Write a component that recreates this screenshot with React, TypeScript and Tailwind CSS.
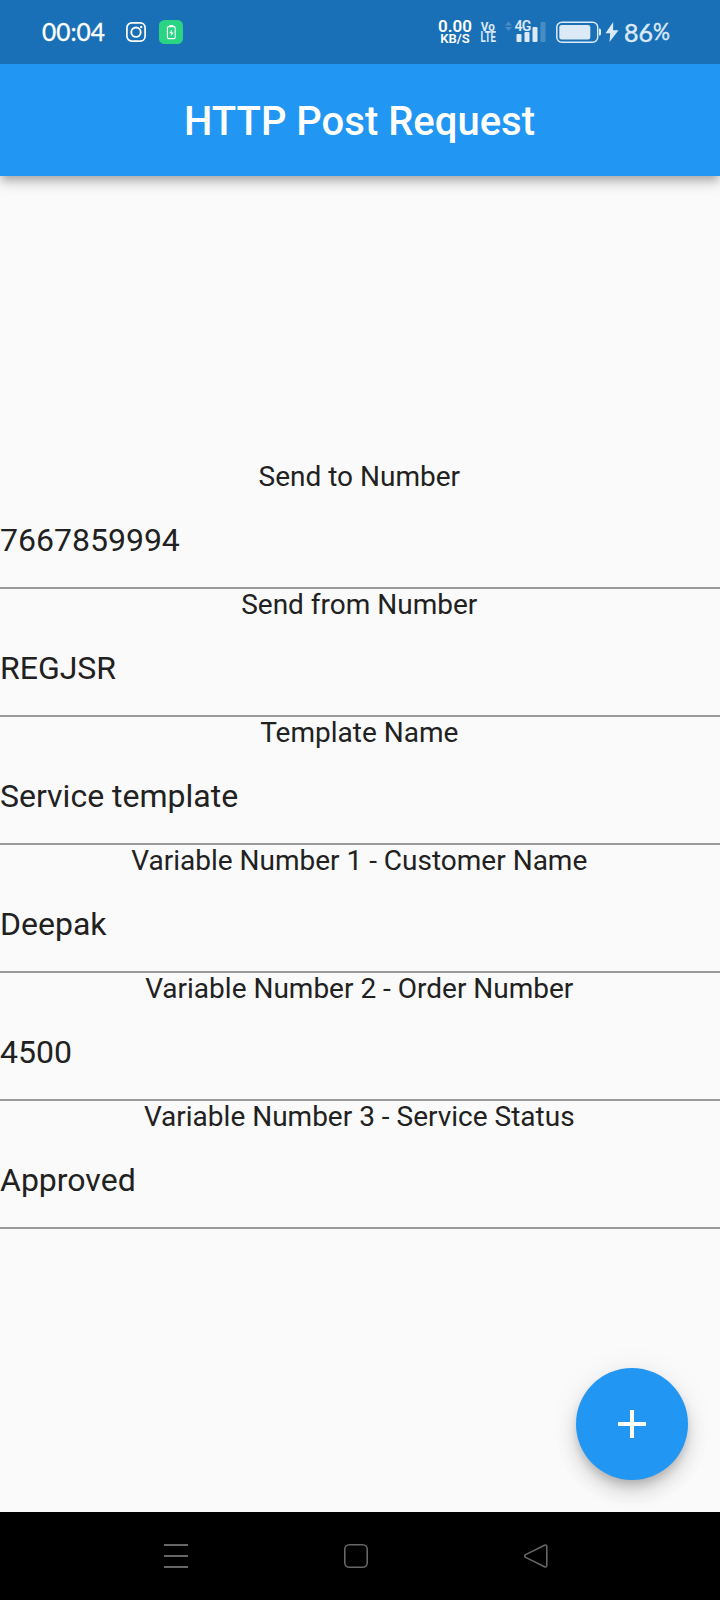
const fields = [
  { label: 'Send to Number', value: '7667859994' },
  { label: 'Send from Number', value: 'REGJSR' },
  { label: 'Template Name', value: 'Service template' },
  { label: 'Variable Number 1 - Customer Name', value: 'Deepak' },
  { label: 'Variable Number 2 - Order Number', value: '4500' },
  { label: 'Variable Number 3 - Service Status', value: 'Approved' },
];

function InstagramIcon() {
  return (
    <svg className="ml-[21px] block h-5 w-5 shrink-0" viewBox="0 0 20 20" fill="none" stroke="#fff">
      <rect x="0.9" y="0.9" width="18.2" height="18.2" rx="4.8" strokeWidth="1.7" />
      <circle cx="10" cy="10.2" r="4.7" strokeWidth="1.9" />
      <circle cx="15.2" cy="4.9" r="1.2" fill="#fff" stroke="none" />
    </svg>
  );
}

function BatterySaverBadge() {
  return (
    <svg className="ml-[13px] block h-6 w-6 shrink-0" viewBox="0 0 24 24">
      <rect width="24" height="24" rx="5.5" fill="#2bd482" />
      <rect x="8.4" y="6.6" width="7.8" height="12" rx="1.3" fill="none" stroke="#fff" strokeWidth="1.1" />
      <rect x="10.3" y="5" width="4" height="1.6" fill="#fff" />
      <path d="M13.2 9.6 10.1 13.2h2v2.9l2.6-3.6h-2z" fill="#fff" />
    </svg>
  );
}

function StatusBar() {
  return (
    <header className="relative z-10 flex h-16 items-center bg-[#1a70b7] pl-[42px] text-white">
      <div className="w-[63px] whitespace-nowrap font-['Lato'] text-[24.5px] leading-6 [-webkit-text-stroke:0.3px_white]">00:04</div>
      <InstagramIcon />
      <BatterySaverBadge />
      <div className="ml-[255px] flex w-[34px] shrink-0 flex-col items-center whitespace-nowrap font-['Roboto'] font-semibold">
        <span className="text-[17px] leading-[13px]">0.00</span>
        <span className="text-[13px] leading-[12px]">KB/S</span>
      </div>
      <div className="ml-[8px] flex w-4 shrink-0 flex-col items-center whitespace-nowrap font-['Roboto'] font-bold text-[#dce9f6]">
        <span className="origin-center scale-x-90 text-[13px] leading-[11px]">Vo</span>
        <span className="origin-center scale-x-[0.68] text-[14px] leading-[11px]">LTE</span>
      </div>
      <div className="relative ml-[9px] h-[22px] w-[41px] shrink-0">
        <svg className="block" width="41" height="22" viewBox="0 0 41 22">
          <path d="M0 4.500 3.500 0.500 7 4.500zM0 6 3.500 10 7 6z" fill="#4a8cc6" />
          <rect x="11.500" y="13" width="5" height="8" rx="1" fill="#dce9f6" />
          <rect x="19.500" y="11" width="5" height="10" rx="1" fill="#dce9f6" />
          <rect x="27.500" y="6" width="5" height="15" rx="1" fill="#dce9f6" />
          <rect x="35.500" y="1" width="5" height="20" rx="1" fill="#498dc5" />
        </svg>
        <span className="absolute left-[9.5px] top-[-1px] font-['Roboto'] text-[14px] font-semibold leading-[13px] tracking-[-0.8px] text-[#dce9f6]">4G</span>
      </div>
      <svg className="ml-[10px] block h-[22px] w-[46px] shrink-0" viewBox="0 0 46 22">
        <rect x="0.8" y="1.300" width="40.900" height="19.900" rx="5" fill="none" stroke="#dce9f6" strokeWidth="1.500" />
        <rect x="3.300" y="4" width="31" height="14.500" rx="2.500" fill="#dce9f6" />
        <path d="M43 7.500h.5a1.500 1.500 0 0 1 1.500 1.500v4A1.500 1.500 0 0 1 43.500 14.500H43z" fill="#dce9f6" />
      </svg>
      <svg className="ml-[3px] block h-5 w-[14px] shrink-0" viewBox="0 0 14 20">
        <path d="M8.200 0 .5 11.300h4.700L4.500 20 13.500 8.200H8.100z" fill="#dce9f6" />
      </svg>
      <div className="ml-[5px] flex items-baseline whitespace-nowrap font-['Lato'] leading-6 text-[#dce9f6] [-webkit-text-stroke:0.4px_#dce9f6]">
        <span className="text-[25px]">86</span>
        <span className="relative -top-[2px] origin-left scale-x-[0.88] text-[24px]">%</span>
      </div>
    </header>
  );
}

export default function App() {
  return (
    <div className="relative flex h-[1600px] w-[720px] flex-col overflow-hidden bg-[#fafafa] font-['Roboto',sans-serif]">
      <StatusBar />
      <div className="flex h-28 items-center justify-center bg-[#2196f3] pr-px pt-1 shadow-[0_4px_8px_-2px_rgba(0,0,0,0.2),0_8px_10px_0_rgba(0,0,0,0.14),0_2px_20px_0_rgba(0,0,0,0.08)]">
        <h1 className="whitespace-nowrap text-[40px] font-medium leading-[48px] text-white">HTTP Post Request</h1>
      </div>
      <main className="flex flex-1 flex-col pt-[285px]">
        {fields.map((f) => (
          <div key={f.label} className="flex h-32 flex-col border-b-2 border-[#999999] text-[#212121]">
            <div className="h-[31px] pr-[1.5px] text-center text-[28px] leading-[32px]">{f.label}</div>
            <div className="pt-[30px] text-[32px] leading-[36px]">{f.value}</div>
          </div>
        ))}
      </main>
      <button
        aria-label="Add"
        className="absolute left-[576px] top-[1368px] flex h-28 w-28 items-center justify-center rounded-full bg-[#2196f3] shadow-[0_6px_10px_-2px_rgba(0,0,0,0.18),0_12px_20px_0_rgba(0,0,0,0.14),0_2px_32px_0_rgba(0,0,0,0.06)]"
      >
        <svg width="28" height="28" viewBox="0 0 28 28" fill="#fff">
          <path d="M12 0h4v12h12v4H16v12h-4V16H0v-4h12z" />
        </svg>
      </button>
      <nav className="flex h-[88px] items-center bg-black pl-[164px]">
        <svg width="24" height="24" viewBox="0 0 24 24" fill="#666">
          <path d="M0 0h24v2H0zM0 11h24v2H0zM0 22h24v2H0z" />
        </svg>
        <svg className="ml-[156px]" width="24" height="24" viewBox="0 0 24 24" fill="none" stroke="#666" strokeWidth="1.600">
          <rect x="0.8" y="0.8" width="22.400" height="22.400" rx="4.500" />
        </svg>
        <svg className="ml-[156px]" width="24" height="24" viewBox="0 0 24 24" fill="none" stroke="#666" strokeWidth="1.600">
          <path d="M1.600 10.600 20.500 1.200a1.500 1.500 0 0 1 2.300 1.400v18.800a1.500 1.500 0 0 1-2.300 1.400L1.600 13.400a1.600 1.600 0 0 1 0-2.800z" />
        </svg>
      </nav>
    </div>
  );
}
